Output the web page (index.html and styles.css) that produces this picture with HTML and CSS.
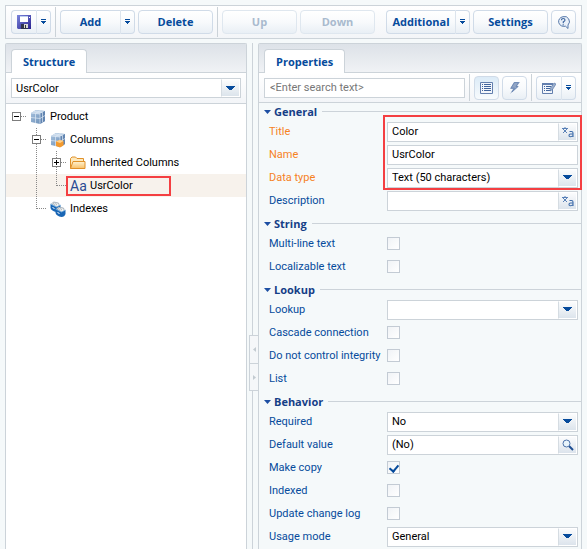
FILE: index.html
```html
<!DOCTYPE html>
<html lang="en">
<head>
<meta charset="utf-8">
<title>Product</title>
<link rel="stylesheet" href="styles.css">
</head>
<body>
<svg class="sprite" aria-hidden="true">
  <defs>
    <linearGradient id="floppy" x1="0" y1="0" x2="1" y2="1"><stop offset="0" stop-color="#7b86dc"/><stop offset="1" stop-color="#29218f"/></linearGradient>
    <linearGradient id="gold" x1="0" y1="0" x2="0" y2="1"><stop offset="0" stop-color="#fff3d2"/><stop offset="1" stop-color="#f8c068"/></linearGradient>
    <linearGradient id="steel" x1="0" y1="0" x2="1" y2="1"><stop offset="0" stop-color="#a9c4e0"/><stop offset="1" stop-color="#6488b2"/></linearGradient>
  </defs>
  <symbol id="down" viewBox="0 0 9 5"><path d="M0 0h9v1h-1v1h-1v1H6v1H3V3H2V2H1V1H0z" fill="#064b9c" shape-rendering="crispEdges"/></symbol>
  <symbol id="more" viewBox="0 0 5 6"><path d="M0 0h5v1H0zM0 2h5v1H4v1H3v1H2V4H1V3H0z" fill="#064b9c" shape-rendering="crispEdges"/></symbol>
  <symbol id="cubes" viewBox="0 0 16 16">
    <path d="M1 4l5-3 9 1v10l-5 3-9-2z" fill="url(#steel)"/>
    <path d="M1 4l5-3 9 1-5 3z" fill="#c2d5e8"/>
    <path d="M10 5l5-3v10l-5 3z" fill="#6285b1"/>
    <path d="M1 4l9 1v10M1 8.500l9 1 5-3M5.500 4.500v9.500M5.500 4.500l5-3M12.500 3.500v10M3.500 2.500l9 1" fill="none" stroke="#dfeaf5" stroke-width=".7"/>
  </symbol>
  <symbol id="lang" viewBox="0 0 14 12">
    <path d="M1 2.500h6M4 1v1.500M2 3l4 4M6 3L2 7" fill="none" stroke="#4a75b0" stroke-width=".9"/>
    <path d="M8.500 5.500h2q1.500 0 1.500 1.500v4M12 8H9.500Q8 8 8 9.400t1.500 1.300Q11 10.700 12 9.500" fill="none" stroke="#3f6dab" stroke-width="1.100"/>
  </symbol>
  <symbol id="bin" viewBox="0 0 10 11">
    <path d="M1 3l2-2 5 1 1 3-3 1z" fill="#f4f4f1" stroke="#8b9aa8" stroke-width=".7"/>
    <path d="M2.500 3.500l1-2M4 4l1-2M5.500 4.500l1-2" stroke="#8b9aa8" stroke-width=".6"/>
    <path d="M0 3l6 3 4-2v4q-1 3-4 3-5-1-6-4z" fill="#1966b5"/>
    <path d="M0 3l6 3 4-2" fill="none" stroke="#79b6e8" stroke-width=".7"/>
    <path d="M2 6.500l2 1" stroke="#fff"/>
  </symbol>
</svg>

<header class="toolbar">
  <div class="split">
    <button class="btn icon-btn" aria-label="Save"><svg width="14" height="14" viewBox="0 0 14 14"><path d="M0 0h14v14H1l-1-1z" fill="url(#floppy)"/><path d="M3 1h8v6H3z" fill="#fff"/><path d="M3 1h8v1H3z" fill="#bdcff2"/><path d="M4 9h7v5H4z" fill="#30344b"/><path d="M7 9h4v4H7z" fill="#d9dad5"/><path d="M8 10h1v3H8z" fill="#333"/><path d="M12 2h1v1h-1z" fill="#fff"/></svg></button>
    <button class="btn drop" aria-label="Save options"><svg width="5" height="6"><use href="#more"/></svg></button>
  </div>
  <span class="rule"></span>
  <div class="split wide">
    <button class="btn label">Add</button>
    <button class="btn drop" aria-label="Add options"><svg width="5" height="6"><use href="#more"/></svg></button>
  </div>
  <button class="btn label standard">Delete</button>
  <span class="rule"></span>
  <button class="btn label standard" disabled>Up</button>
  <button class="btn label standard" disabled>Down</button>
  <div class="split additional">
    <button class="btn label">Additional</button>
    <button class="btn drop" aria-label="Additional options"><svg width="5" height="6"><use href="#more"/></svg></button>
  </div>
  <button class="btn label standard">Settings</button>
  <button class="btn square" aria-label="Help"><svg width="13" height="13" viewBox="0 0 13 13"><path d="M6 .7a5.300 4.900 0 1 0 2.500 9.500L11 12.500V9A5 5 0 0 0 6 .7z" fill="#e9f0f9" stroke="#5678a9"/><path d="M4.500 4.200q0-1.700 1.700-1.700T8 4.100q0 1-1.700 1.800v1.400M6.200 8.200v1.300" fill="none" stroke="#4169a1" stroke-width="1.200"/></svg></button>
</header>

<main class="workspace">
  <section class="panel structure">
    <div class="tabs"><button class="tab">Structure</button></div>
    <div class="strip">
      <div class="field combo">
        <select aria-label="Element"><option>UsrColor</option></select>
        <span class="trigger"><svg width="9" height="5"><use href="#down"/></svg></span>
      </div>
    </div>
    <ul class="tree">
      <li>
        <div class="node root"><button class="toggle minus" aria-label="Collapse"></button><i class="dots"></i><svg width="16" height="16"><use href="#cubes"/></svg><span>Product</span></div>
        <ul class="level-one">
          <li>
            <div class="node one"><button class="toggle minus" aria-label="Collapse"></button><i class="dots"></i><svg width="16" height="16" viewBox="0 0 16 16"><use href="#cubes" width="16" height="16"/><path d="M6 9.500L9.500 8l4 1v4.500L10 15.500 6 14z" fill="#f39a2e"/><path d="M6 9.500L9.500 8l4 1-3.500 2z" fill="#ffd08a"/></svg><span>Columns</span></div>
            <ul class="level-two">
              <li><div class="node two"><button class="toggle plus" aria-label="Expand"></button><i class="dots"></i><svg width="16" height="16" viewBox="0 0 16 16"><path d="M.5 13.500v-10L2 2h3.500L7 3.500h6.500v3" fill="#fde9bd" stroke="#e0912a"/><path d="M.5 13.500l2.500-7h12v7z" fill="url(#gold)" stroke="#e0912a"/></svg><span>Inherited Columns</span></div></li>
              <li><div class="node two selected"><i class="dots long"></i><b class="type">Aa</b><span>UsrColor</span><i class="mark mark-node"></i></div></li>
            </ul>
          </li>
          <li><div class="node one"><i class="dots long"></i><svg width="16" height="16" viewBox="0 0 16 16"><use href="#bin" width="11" height="11"/><use href="#bin" x="5" y="5" width="11" height="11"/></svg><span>Indexes</span></div></li>
        </ul>
      </li>
    </ul>
  </section>

  <div class="splitter">
    <div class="handle"><button aria-label="Collapse left"><svg width="3" height="5" viewBox="0 0 3 5"><path d="M3 0v5L0 2.500z" fill="#c3cbd1"/></svg></button><button aria-label="Collapse right"><svg width="3" height="5" viewBox="0 0 3 5"><path d="M0 0v5l3-2.500z" fill="#c3cbd1"/></svg></button></div>
  </div>

  <section class="panel properties">
    <div class="tabs"><button class="tab">Properties</button></div>
    <div class="strip search-row">
      <input class="search" type="text" aria-label="Search" placeholder="&lt;Enter search text&gt;">
      <span class="rule"></span>
      <button class="btn square pressed" aria-label="List view"><svg width="13" height="12" viewBox="0 0 13 12"><path d="M.5.5h12v11H.5z" fill="#f3f6fb" stroke="#637fae"/><path d="M2 2.500h1M2 4.500h1M2 6.500h1M2 8.500h1M4 2.500h7M4 4.500h7M4 6.500h7M4 8.500h7" stroke="#40649c"/></svg></button>
      <button class="btn square" aria-label="Events"><svg width="11" height="12" viewBox="0 0 11 12"><path d="M5 0h6L8 4h2L1 12l3-5H1z" fill="#91a5c5"/><path d="M5.500.5h4L7 4.500h2L3 10l2.500-4H2z" fill="none" stroke="#6885b3" stroke-width=".8"/></svg></button>
      <span class="rule"></span>
      <div class="split">
        <button class="btn icon-btn" aria-label="Edit view"><svg width="14" height="12" viewBox="0 0 14 12"><path d="M.5 1.500h10v10H.5z" fill="#f3f6fb" stroke="#637fae"/><path d="M0 1h11v2H0z" fill="#637fae"/><path d="M2 4.500h1M2 6.500h1M2 8.500h1M4 4.500h5M4 6.500h4M4 8.500h5" stroke="#40649c"/><path d="M8 9l.5-3L12 1l2 1-3.500 5.500z" fill="#9bafcc" stroke="#5f7cac" stroke-width=".7"/></svg></button>
        <button class="btn drop" aria-label="View options"><svg width="5" height="6"><use href="#more"/></svg></button>
      </div>
    </div>

    <form class="groups">
      <section class="group first">
        <h2><svg width="7" height="4" viewBox="0 0 7 4"><path d="M0 0h7L3.500 4z" fill="#1d4fa3"/></svg>General</h2>
        <div class="prop required"><label for="title">Title</label><div class="field"><input id="title" type="text" value="Color"><button type="button" class="trigger" aria-label="Translate"><svg width="14" height="12"><use href="#lang"/></svg></button></div></div>
        <div class="prop required"><label for="name">Name</label><div class="field"><input id="name" type="text" value="UsrColor"></div></div>
        <div class="prop required"><label for="type">Data type</label><div class="field combo"><select id="type"><option>Text (50 characters)</option></select><span class="trigger"><svg width="9" height="5"><use href="#down"/></svg></span></div></div>
        <div class="prop"><label for="description">Description</label><div class="field"><input id="description" type="text"><button type="button" class="trigger" aria-label="Translate"><svg width="14" height="12"><use href="#lang"/></svg></button></div></div>
        <i class="mark mark-fields"></i>
      </section>
      <section class="group">
        <h2><svg width="7" height="4" viewBox="0 0 7 4"><path d="M0 0h7L3.500 4z" fill="#1d4fa3"/></svg>String</h2>
        <div class="prop"><label for="multi">Multi-line text</label><input id="multi" type="checkbox"></div>
        <div class="prop"><label for="local">Localizable text</label><input id="local" type="checkbox"></div>
      </section>
      <section class="group">
        <h2><svg width="7" height="4" viewBox="0 0 7 4"><path d="M0 0h7L3.500 4z" fill="#1d4fa3"/></svg>Lookup</h2>
        <div class="prop"><label for="lookup">Lookup</label><div class="field combo"><select id="lookup"><option></option></select><span class="trigger"><svg width="9" height="5"><use href="#down"/></svg></span></div></div>
        <div class="prop"><label for="cascade">Cascade connection</label><input id="cascade" type="checkbox"></div>
        <div class="prop"><label for="integrity">Do not control integrity</label><input id="integrity" type="checkbox"></div>
        <div class="prop"><label for="list">List</label><input id="list" type="checkbox"></div>
      </section>
      <section class="group">
        <h2><svg width="7" height="4" viewBox="0 0 7 4"><path d="M0 0h7L3.500 4z" fill="#1d4fa3"/></svg>Behavior</h2>
        <div class="prop"><label for="required">Required</label><div class="field combo"><select id="required"><option>No</option></select><span class="trigger"><svg width="9" height="5"><use href="#down"/></svg></span></div></div>
        <div class="prop"><label for="default">Default value</label><div class="field"><input id="default" type="text" value="(No)"><button type="button" class="trigger" aria-label="Find"><svg width="12" height="12" viewBox="0 0 12 12"><path d="M7 7l4 4" stroke="#1d4d91" stroke-width="2"/><circle cx="4.500" cy="4.500" r="3.500" fill="#e8f4fb" stroke="#4d72aa"/></svg></button></div></div>
        <div class="prop"><label for="copy">Make copy</label><input id="copy" type="checkbox" checked></div>
        <div class="prop"><label for="indexed">Indexed</label><input id="indexed" type="checkbox"></div>
        <div class="prop"><label for="log">Update change log</label><input id="log" type="checkbox"></div>
        <div class="prop"><label for="usage">Usage mode</label><div class="field combo"><select id="usage"><option>General</option></select><span class="trigger"><svg width="9" height="5"><use href="#down"/></svg></span></div></div>
      </section>
    </form>
  </section>
</main>
</body>
</html>
```
FILE: styles.css
```css
* { box-sizing: border-box; }

body {
  margin: 0;
  padding: 5px 5px 0;
  min-height: 100vh;
  display: flex;
  flex-direction: column;
  gap: 4px;
  background: #f5f9fa;
  color: #000;
  font: 11px/14px Roboto, "Liberation Sans", sans-serif;
}

button, input, select { font: inherit; color: inherit; margin: 0; }
button { padding: 0; border: 0; background: none; }
ul { list-style: none; margin: 0; padding: 0; }
svg { display: block; flex: none; }
.sprite { position: absolute; width: 0; height: 0; }

/* Toolbar */
.toolbar {
  display: flex;
  align-items: center;
  gap: 3px;
  height: 34px;
  padding: 0 5px;
  border: 1px solid #ccd3d9;
  background: linear-gradient(#fff, #f3f5f8);
}

.btn {
  display: flex;
  align-items: center;
  justify-content: center;
  height: 24px;
  border: 1px solid #d0dbe8;
  border-radius: 4px;
  background: linear-gradient(#fff, #f8fafc 50%, #e9eff5);
  color: #064b9c;
}
.label { font-family: "Open Sans", "Noto Sans", sans-serif; font-weight: 700; }
.standard { width: 75px; }
.square { width: 25px; }
.btn:disabled { color: #a9bace; border-color: #dfe7ef; }
.pressed { background: linear-gradient(#dcebf7, #f8fbfd); }

.split { display: flex; width: 40px; }
.split .btn:first-child { flex: 1; border-right: 0; border-radius: 4px 0 0 4px; }
.split .drop { width: 15px; border-left-color: #dce4ed; border-radius: 0 4px 4px 0; }
.wide { width: 75px; }
.additional { width: 84px; margin-left: auto; }

.rule {
  width: 3px;
  height: 30px;
  background: linear-gradient(#cbd2d8, #cbd2d8) 1px 0 / 1px 100% no-repeat;
}

/* Panels */
.workspace { flex: 1; display: flex; }
.panel { border: 1px solid #ccd3d9; border-bottom: 0; border-radius: 2px 2px 0 0; }
.structure { flex: 0 0 242px; background: #fff; }
.properties { flex: 1; min-width: 0; background: #f5f9fa; }

.tabs {
  display: flex;
  align-items: flex-end;
  height: 29px;
  padding: 0 5px;
  border-bottom: 1px solid #ccd3d9;
  background: linear-gradient(#dde2e8, #f0f2f5);
}
.tab {
  height: 24px;
  margin-bottom: -1px;
  padding: 0 11px;
  border: 1px solid #ccd3d9;
  border-bottom: 0;
  border-radius: 4px 4px 0 0;
  background: #fff;
  color: #064b9c;
  font-family: "Open Sans", "Noto Sans", sans-serif;
  font-weight: 700;
}
.strip {
  display: flex;
  align-items: center;
  height: 31px;
  padding: 0 5px;
  border-bottom: 1px solid #ccd3d9;
  background: linear-gradient(#fff, #f3f5f8);
}
.search-row { gap: 3px; height: 30px; }
.search-row .rule { height: 27px; }
.search {
  flex: 1;
  min-width: 0;
  height: 20px;
  padding: 0 5px;
  border: 1px solid #ccd3d9;
  background: #fff;
}
.search::placeholder { color: #777; opacity: 1; }

/* Fields */
.field {
  flex: 1;
  min-width: 0;
  display: flex;
  height: 20px;
  border: 1px solid #ccd3d9;
  background: #fff;
}
.field input, .field select {
  flex: 1;
  width: 100%;
  min-width: 0;
  padding: 1px 4px 0;
  border: 0;
  background: none;
  appearance: none;
}
.combo { position: relative; }
.trigger {
  display: flex;
  align-items: center;
  justify-content: center;
  width: 19px;
  border: 1px solid #fff;
  border-left-color: #d5dce2;
  background: linear-gradient(#fbfcfd, #dce4ec);
}
.combo .trigger { position: absolute; top: 0; right: 0; bottom: 0; pointer-events: none; }

/* Tree */
.tree { padding-top: 1px; }
.node {
  position: relative;
  display: flex;
  align-items: center;
  height: 23px;
  padding-left: 6px;
}
.node.one { padding-left: 26px; }
.node.two { padding-left: 46px; }
.node span { margin-left: 4px; }
.toggle {
  position: relative;
  z-index: 1;
  width: 9px;
  height: 9px;
  border: 1px solid #7d7d7d;
  background: linear-gradient(#000, #000) center / 5px 1px no-repeat #fff;
}
.plus {
  background: linear-gradient(#000, #000) center / 5px 1px no-repeat,
    linear-gradient(#000, #000) center / 1px 5px no-repeat, #fff;
}
.dots { width: 5px; height: 1px; margin-right: 4px; border-top: 1px dotted #888; }
.dots.long { width: 10px; margin-left: 4px; }
.level-one, .level-two { position: relative; }
.level-one::before, .level-two::before {
  content: "";
  position: absolute;
  z-index: 1;
  top: 0;
  bottom: 11px;
  left: 30px;
  border-left: 1px dotted #888;
}
.level-two::before { left: 50px; }
.selected { background: #f7f2ec; }
.type { width: 16px; color: #2b4a93; font-size: 14px; font-weight: 400; }
.mark { position: absolute; border: 2px solid #f43f42; pointer-events: none; }
.mark-node { top: 2px; left: 60px; width: 105px; height: 20px; }

/* Splitter */
.splitter {
  width: 11px;
  padding: 292px 0 0 2px;
  background: linear-gradient(#ccd3d9, #ccd3d9) 5px 0 / 1px 100% no-repeat;
}
.handle { border: 1px solid #ccd3d9; border-right: 0; background: #f5f7f9; }
.handle button { display: flex; align-items: center; justify-content: center; width: 100%; height: 27px; }
.handle button + button { border-top: 1px solid #ccd3d9; }

/* Property groups */
.group { position: relative; margin-top: 3px; }
.group.first { margin-top: 0; }
.group h2 {
  display: flex;
  align-items: center;
  gap: 3px;
  height: 17px;
  margin: 0;
  padding-left: 5px;
  color: #153e87;
  font: 700 11px/14px "Open Sans", "Noto Sans", sans-serif;
}
.group h2::after { content: ""; flex: 1; height: 1px; margin-left: 2px; background: #ccd3d9; }
.prop { display: flex; align-items: center; height: 23px; padding: 0 3px 0 10px; color: #064b9c; }
.prop label { width: 118px; white-space: nowrap; }
.prop .field { color: #000; }
.required label { color: #f5821f; }
.mark-fields { top: 12px; right: -1px; left: 124px; height: 75px; }

input[type="checkbox"] {
  appearance: none;
  width: 13px;
  height: 13px;
  border: 1px solid #c3cbd4;
  background: linear-gradient(135deg, #f0f3f6, #fff);
}
input[type="checkbox"]:checked::before {
  content: "";
  display: block;
  width: 4px;
  height: 7px;
  margin: 1px 0 0 3px;
  border: solid #064b9c;
  border-width: 0 2px 2px 0;
  transform: rotate(40deg);
}
```
